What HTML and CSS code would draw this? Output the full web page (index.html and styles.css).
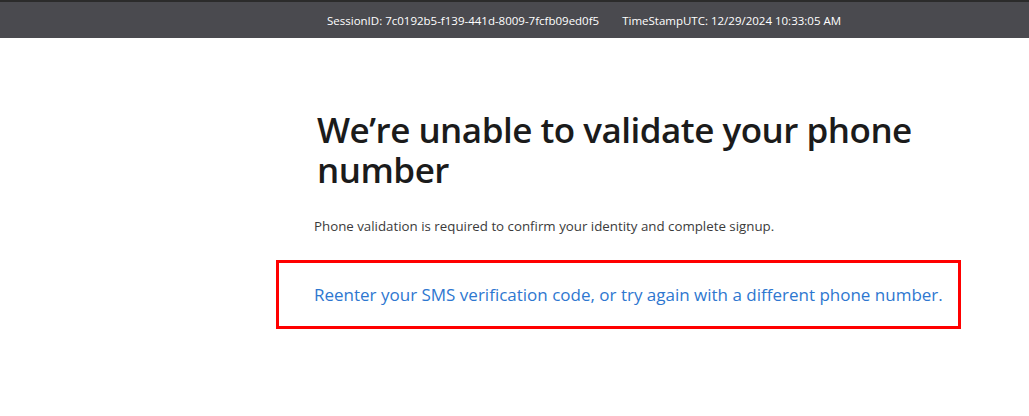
FILE: index.html
```html
<!DOCTYPE html>
<html>
<head>
  <title>Phone validation</title>
  <meta name="viewport" content="width=device-width, initial-scale=1">
  <link rel="stylesheet" href="styles.css">
</head>
<body>
  <div class="topbar">
    <span>SessionID: 7c0192b5-f139-441d-8009-7fcfb09ed0f5</span>
    <span>TimeStampUTC: 12/29/2024 10:33:05 AM</span>
  </div>
  <div class="main">
    <h1>We’re unable to validate your phone number</h1>
    <p class="intro">Phone validation is required to confirm your identity and complete signup.</p>
    <div class="notice">
      <a href="#">Reenter your SMS verification code, or try again with a different phone number.</a>
    </div>
  </div>
</body>
</html>
```

FILE: styles.css
```css
body {
  margin: 0;
  font-family: "Segoe UI", "Open Sans", sans-serif;
  background-color: #fff;
}
.topbar {
  height: 36px;
  border-top: 2px solid #2b2b2b;
  background-color: #4a4a4f;
  color: #fff;
  font-size: 11.5px;
  display: flex;
  align-items: center;
  gap: 23px;
  padding-left: 327px;
}
.main {
  margin-left: 276px;
  width: 685px;
  padding-top: 72px;
}
h1 {
  margin: 0 0 0 41px;
  font-size: 35px;
  font-weight: 600;
  letter-spacing: -0.5px;
  line-height: 40px;
  color: #1b1b1b;
}
.intro {
  margin: 27px 0 0 38px;
  font-size: 13.3px;
  color: #3b3b3b;
}
.notice {
  margin-top: 25px;
  border: 3px solid #ff0000;
  height: 63px;
  display: flex;
  align-items: center;
  padding-left: 35px;
}
.notice a {
  font-size: 17px;
  color: #2e77d0;
  text-decoration: none;
}
```
